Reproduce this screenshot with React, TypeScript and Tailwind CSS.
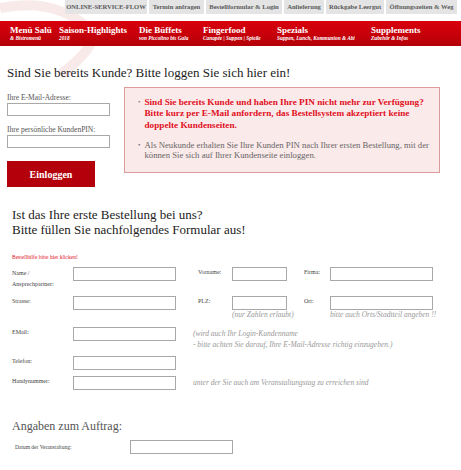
const tabs = [
  { label: "ONLINE-SERVICE-FLOW", w: "w-[82px]" },
  { label: "Termin anfragen", w: "w-[55px]" },
  { label: "Bestellformular & Login", w: "w-[76px]" },
  { label: "Anlieferung", w: "w-[40px]" },
  { label: "Rückgabe Leergut", w: "w-[58px]" },
  { label: "Öffnungszeiten & Weg", w: "w-[71px]" },
];

const navItems = [
  { title: "Menü Salü", sub: "& Bistromenü", w: "w-[49px]" },
  { title: "Saison-Highlights", sub: "2018", w: "w-[80px]" },
  { title: "Die Büffets", sub: "von Piccolino bis Gala", w: "w-[64px]" },
  { title: "Fingerfood", sub: "Canapée | Suppen | Spieße", w: "w-[74px]" },
  { title: "Spezials", sub: "Suppen, Lunch, Kommunion & Abi", w: "w-[94px]" },
  { title: "Supplements", sub: "Zubehör & Infos", w: "w-[80px]" },
];

const Field = ({ w }: { w: string }) => (
  <div className={`${w} h-[14px] shrink-0 border border-[#a8a8a8] bg-white`} />
);

const Label = ({ children, w }: { children: React.ReactNode; w: string }) => (
  <div className={`${w} shrink-0 text-[6px] leading-[11px] text-[#444]`}>{children}</div>
);

export default function App() {
  return (
    <div className="relative w-[461px] h-[470px] overflow-hidden bg-white font-['Liberation_Serif',serif] text-[#333]">
      {/* faint background swoosh */}
      <svg className="absolute left-0 top-0 pointer-events-none" width="200" height="90" viewBox="0 0 200 90">
        <path d="M0 8 C40 0 70 10 90 30 C100 40 80 60 60 75" stroke="#f3d6d6" strokeWidth="10" fill="none" opacity="0.5" />
        <path d="M0 30 C30 20 60 25 75 45" stroke="#f7e3e3" strokeWidth="6" fill="none" opacity="0.5" />
      </svg>

      {/* top tabs */}
      <div className="relative flex gap-[2px] pl-[65px]">
        {tabs.map((t) => (
          <div
            key={t.label}
            className={`${t.w} h-[14px] flex items-center justify-center bg-[#e4e4e4] text-[6.6px] font-bold text-[#5a5a5a] whitespace-nowrap`}
          >
            {t.label}
          </div>
        ))}
      </div>

      {/* red nav */}
      <div className="relative mt-[7px] h-[25px] flex pl-[10px] pt-[4px] bg-gradient-to-b from-[#d8000c] via-[#c8000a] to-[#b30008] text-white">
        {navItems.map((n) => (
          <div key={n.title} className={`${n.w} shrink-0 whitespace-nowrap`}>
            <div className="text-[9px] leading-[10px] font-bold">{n.title}</div>
            <div className="text-[5.3px] leading-[7px] font-bold italic">{n.sub}</div>
          </div>
        ))}
      </div>

      {/* login section */}
      <div className="relative px-[7px] pt-[19px]">
        <h1 className="text-[13px] leading-[16px] text-[#222]">Sind Sie bereits Kunde? Bitte loggen Sie sich hier ein!</h1>
        <div className="mt-[6px] flex">
          <div className="w-[117px] shrink-0 pt-[6px]">
            <div className="text-[7.5px] leading-[9px] text-[#555]">Ihre E-Mail-Adresse:</div>
            <div className="mt-[1px] w-[103px] h-[13px] border border-[#a8a8a8] bg-white" />
            <div className="mt-[9px] text-[7.5px] leading-[9px] text-[#555]">Ihre persönliche KundenPIN:</div>
            <div className="mt-[1px] w-[103px] h-[13px] border border-[#a8a8a8] bg-white" />
            <button className="mt-[13px] w-[88px] h-[26px] bg-[#b3000a] text-white text-[10px] font-bold">Einloggen</button>
          </div>
          <div className="w-[316px] h-[86px] border border-[#dd9a9a] bg-[#fbeaea] pl-[13px] pr-[8px] pt-[9px]">
            <ul>
              <li className="flex gap-[4px] text-[9.2px] leading-[11.3px] font-bold text-[#e0101e]">
                <span className="text-[#777] font-normal text-[7px]">•</span>
                <span>Sind Sie bereits Kunde und haben Ihre PIN nicht mehr zur Verfügung? Bitte kurz per E-Mail anfordern, das Bestellsystem akzeptiert keine doppelte Kundenseiten.</span>
              </li>
              <li className="mt-[9px] flex gap-[4px] leading-[10.5px] text-[8.7px] text-[#666]">
                <span className="text-[7px]">•</span>
                <span>Als Neukunde erhalten Sie Ihre Kunden PIN nach Ihrer ersten Bestellung, mit der können Sie sich auf Ihrer Kundenseite einloggen.</span>
              </li>
            </ul>
          </div>
        </div>
      </div>

      {/* registration form */}
      <div className="relative px-[12px] pt-[20px]">
        <h2 className="text-[13px] leading-[15px] text-[#222]">
          Ist das Ihre erste Bestellung bei uns?
          <br />
          Bitte füllen Sie nachfolgendes Formular aus!
        </h2>
        <div className="mt-[16px] text-[5.5px] leading-[8px] text-[#e0101e]">Bestellhilfe bitte hier klicken!</div>

        <div className="mt-[6px] flex items-start">
          <Label w="w-[61px]">
            <div className="leading-[8px] pt-[2px]">Name /</div>
            <div className="leading-[8px] pt-[3px]">Ansprechpartner:</div>
          </Label>
          <Field w="w-[103px]" />
          <Label w="w-[34px] ml-[22px]">Vorname:</Label>
          <Field w="w-[55px]" />
          <Label w="w-[26px] ml-[17px]">Firma:</Label>
          <Field w="w-[103px]" />
        </div>

        <div className="mt-[8px] flex items-start">
          <Label w="w-[61px]">Strasse:</Label>
          <Field w="w-[103px]" />
          <Label w="w-[34px] ml-[22px]">PLZ:</Label>
          <div className="w-[55px] shrink-0">
            <Field w="w-[55px]" />
            <div className="whitespace-nowrap text-[7.5px] leading-[9px] italic text-[#999]">(nur Zahlen erlaubt)</div>
          </div>
          <Label w="w-[26px] ml-[17px]">Ort:</Label>
          <div className="w-[103px] shrink-0">
            <Field w="w-[103px]" />
            <div className="whitespace-nowrap text-[7.5px] leading-[9px] italic text-[#999]">bitte auch Orts/Stadtteil angeben !!</div>
          </div>
        </div>

        <div className="mt-[8px] flex items-start">
          <Label w="w-[61px]">EMail:</Label>
          <Field w="w-[103px]" />
          <div className="ml-[17px] pt-[1px] text-[7.5px] leading-[11px] italic text-[#999] whitespace-nowrap">
            <div>(wird auch Ihr Login-Kundenname</div>
            <div>- bitte achten Sie darauf, Ihre E-Mail-Adresse richtig einzugeben.)</div>
          </div>
        </div>

        <div className="mt-[6px] flex items-start">
          <Label w="w-[61px]">Telefon:</Label>
          <Field w="w-[103px]" />
        </div>

        <div className="mt-[6px] flex items-start">
          <Label w="w-[61px]">Handynummer:</Label>
          <Field w="w-[103px]" />
          <div className="ml-[17px] text-[7.5px] leading-[13px] italic text-[#999] whitespace-nowrap">unter der Sie auch am Veranstaltungstag zu erreichen sind</div>
        </div>

        <h3 className="mt-[29px] text-[12px] leading-[15px] text-[#555]">Angaben zum Auftrag:</h3>
        <div className="mt-[6px] flex items-start pl-[3px]">
          <div className="w-[115px] shrink-0 text-[5.5px] leading-[14px] text-[#444]">Datum der Veranstaltung:</div>
          <Field w="w-[103px]" />
        </div>
      </div>
    </div>
  );
}
